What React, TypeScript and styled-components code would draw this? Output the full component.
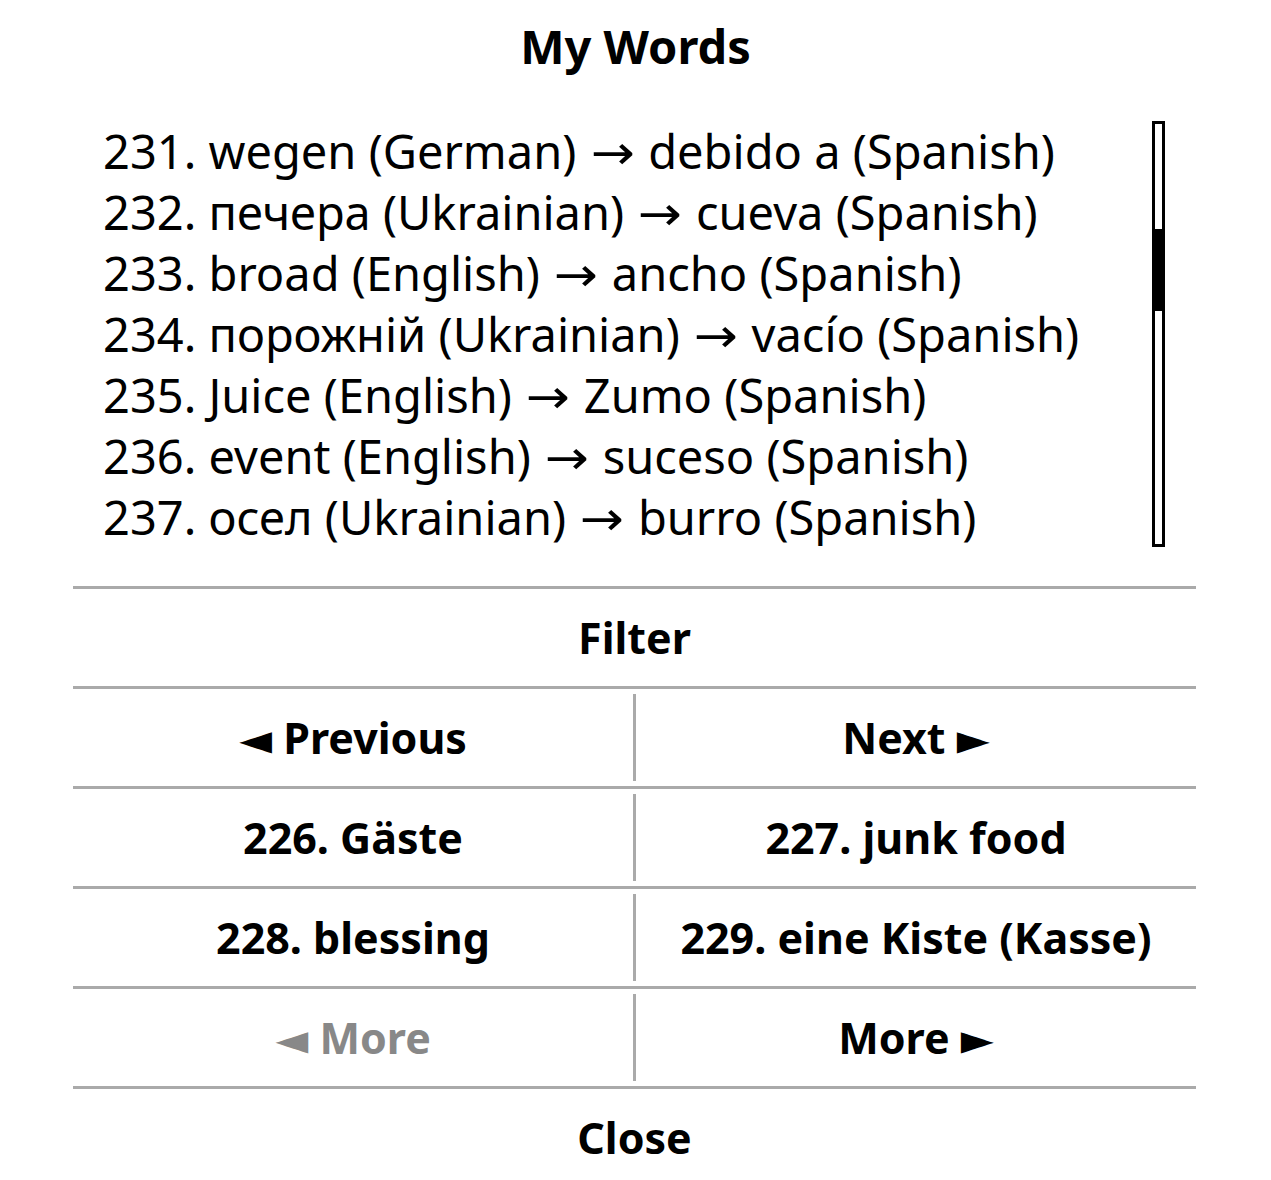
import * as React from 'react';
import styled, { createGlobalStyle } from 'styled-components';

const GlobalStyle = createGlobalStyle`
  html, body {
    margin: 0;
    padding: 0;
    background: #ffffff;
  }
  body {
    font-family: "Noto Sans", "DejaVu Sans", sans-serif;
    color: #000000;
  }
`;

const words = [
  { id: 231, from: 'wegen', fromLang: 'German', to: 'debido a', toLang: 'Spanish' },
  { id: 232, from: 'печера', fromLang: 'Ukrainian', to: 'cueva', toLang: 'Spanish' },
  { id: 233, from: 'broad', fromLang: 'English', to: 'ancho', toLang: 'Spanish' },
  { id: 234, from: 'порожній', fromLang: 'Ukrainian', to: 'vacío', toLang: 'Spanish' },
  { id: 235, from: 'Juice', fromLang: 'English', to: 'Zumo', toLang: 'Spanish' },
  { id: 236, from: 'event', fromLang: 'English', to: 'suceso', toLang: 'Spanish' },
  { id: 237, from: 'осел', fromLang: 'Ukrainian', to: 'burro', toLang: 'Spanish' },
];

const buttonRows: { label: string; disabled?: boolean }[][] = [
  [{ label: '◄ Previous' }, { label: 'Next ►' }],
  [{ label: '226. Gäste' }, { label: '227. junk food' }],
  [{ label: '228. blessing' }, { label: '229. eine Kiste (Kasse)' }],
  [{ label: '◄ More', disabled: true }, { label: 'More ►' }],
];

const Page = styled.div`
  width: 1271px;
  height: 1180px;
  display: flex;
  flex-direction: column;
  overflow: hidden;

  & > * {
    flex-shrink: 0;
  }
`;

const Title = styled.h1`
  margin: 0;
  height: 92px;
  display: flex;
  align-items: center;
  justify-content: center;
  font-size: 47px;
  font-weight: 700;
`;

const ListArea = styled.div`
  margin-top: 29px;
  height: 426px;
  display: flex;
  padding-left: 103px;
`;

const List = styled.ul`
  list-style: none;
  margin: 0;
  padding: 0;
  flex: 1;
`;

const Item = styled.li`
  height: 61px;
  line-height: 61px;
  font-size: 47px;
  white-space: nowrap;
`;

const Arrow = styled.span`
  display: inline-block;
  margin: 0 4px;
  transform: scaleX(1.12);
`;

const ScrollTrack = styled.div`
  width: 13px;
  height: 426px;
  box-sizing: border-box;
  border: 3px solid #000;
  margin-right: 106px;
  position: relative;
`;

const ScrollThumb = styled.div`
  position: absolute;
  left: -2px;
  right: 0;
  top: 105px;
  height: 82px;
  background: #000;
`;

const Menu = styled.div`
  margin: 39px 75px 0 73px;
  display: flex;
  flex-direction: column;
`;

const Divider = styled.div`
  height: 3px;
  flex-shrink: 0;
  background: #aaaaaa;
`;

const Row = styled.div`
  height: 97px;
  flex-shrink: 0;
  display: flex;
  align-items: stretch;
`;

const Cell = styled.button<{ $disabled?: boolean }>`
  flex: 1;
  border: 0;
  background: transparent;
  padding: 0;
  font-family: "Noto Sans", "DejaVu Sans", sans-serif;
  font-size: 43px;
  font-weight: 700;
  color: ${(p) => (p.$disabled ? '#888888' : '#000000')};
  display: flex;
  align-items: center;
  justify-content: center;
  white-space: nowrap;
`;

const VSep = styled.div`
  width: 3px;
  margin: 5px 0;
  background: #aaaaaa;
`;

export default function App() {
  return (
    <Page>
      <GlobalStyle />
      <Title>My Words</Title>
      <ListArea>
        <List>
          {words.map((w) => (
            <Item key={w.id}>
              {w.id}. {w.from} ({w.fromLang}) <Arrow>→</Arrow> {w.to} ({w.toLang})
            </Item>
          ))}
        </List>
        <ScrollTrack>
          <ScrollThumb />
        </ScrollTrack>
      </ListArea>
      <Menu>
        <Divider />
        <Row>
          <Cell>Filter</Cell>
        </Row>
        {buttonRows.map((row, i) => (
          <React.Fragment key={i}>
            <Divider />
            <Row>
              <Cell $disabled={row[0].disabled}>{row[0].label}</Cell>
              <VSep />
              <Cell $disabled={row[1].disabled}>{row[1].label}</Cell>
            </Row>
          </React.Fragment>
        ))}
        <Divider />
        <Row>
          <Cell>Close</Cell>
        </Row>
      </Menu>
    </Page>
  );
}
